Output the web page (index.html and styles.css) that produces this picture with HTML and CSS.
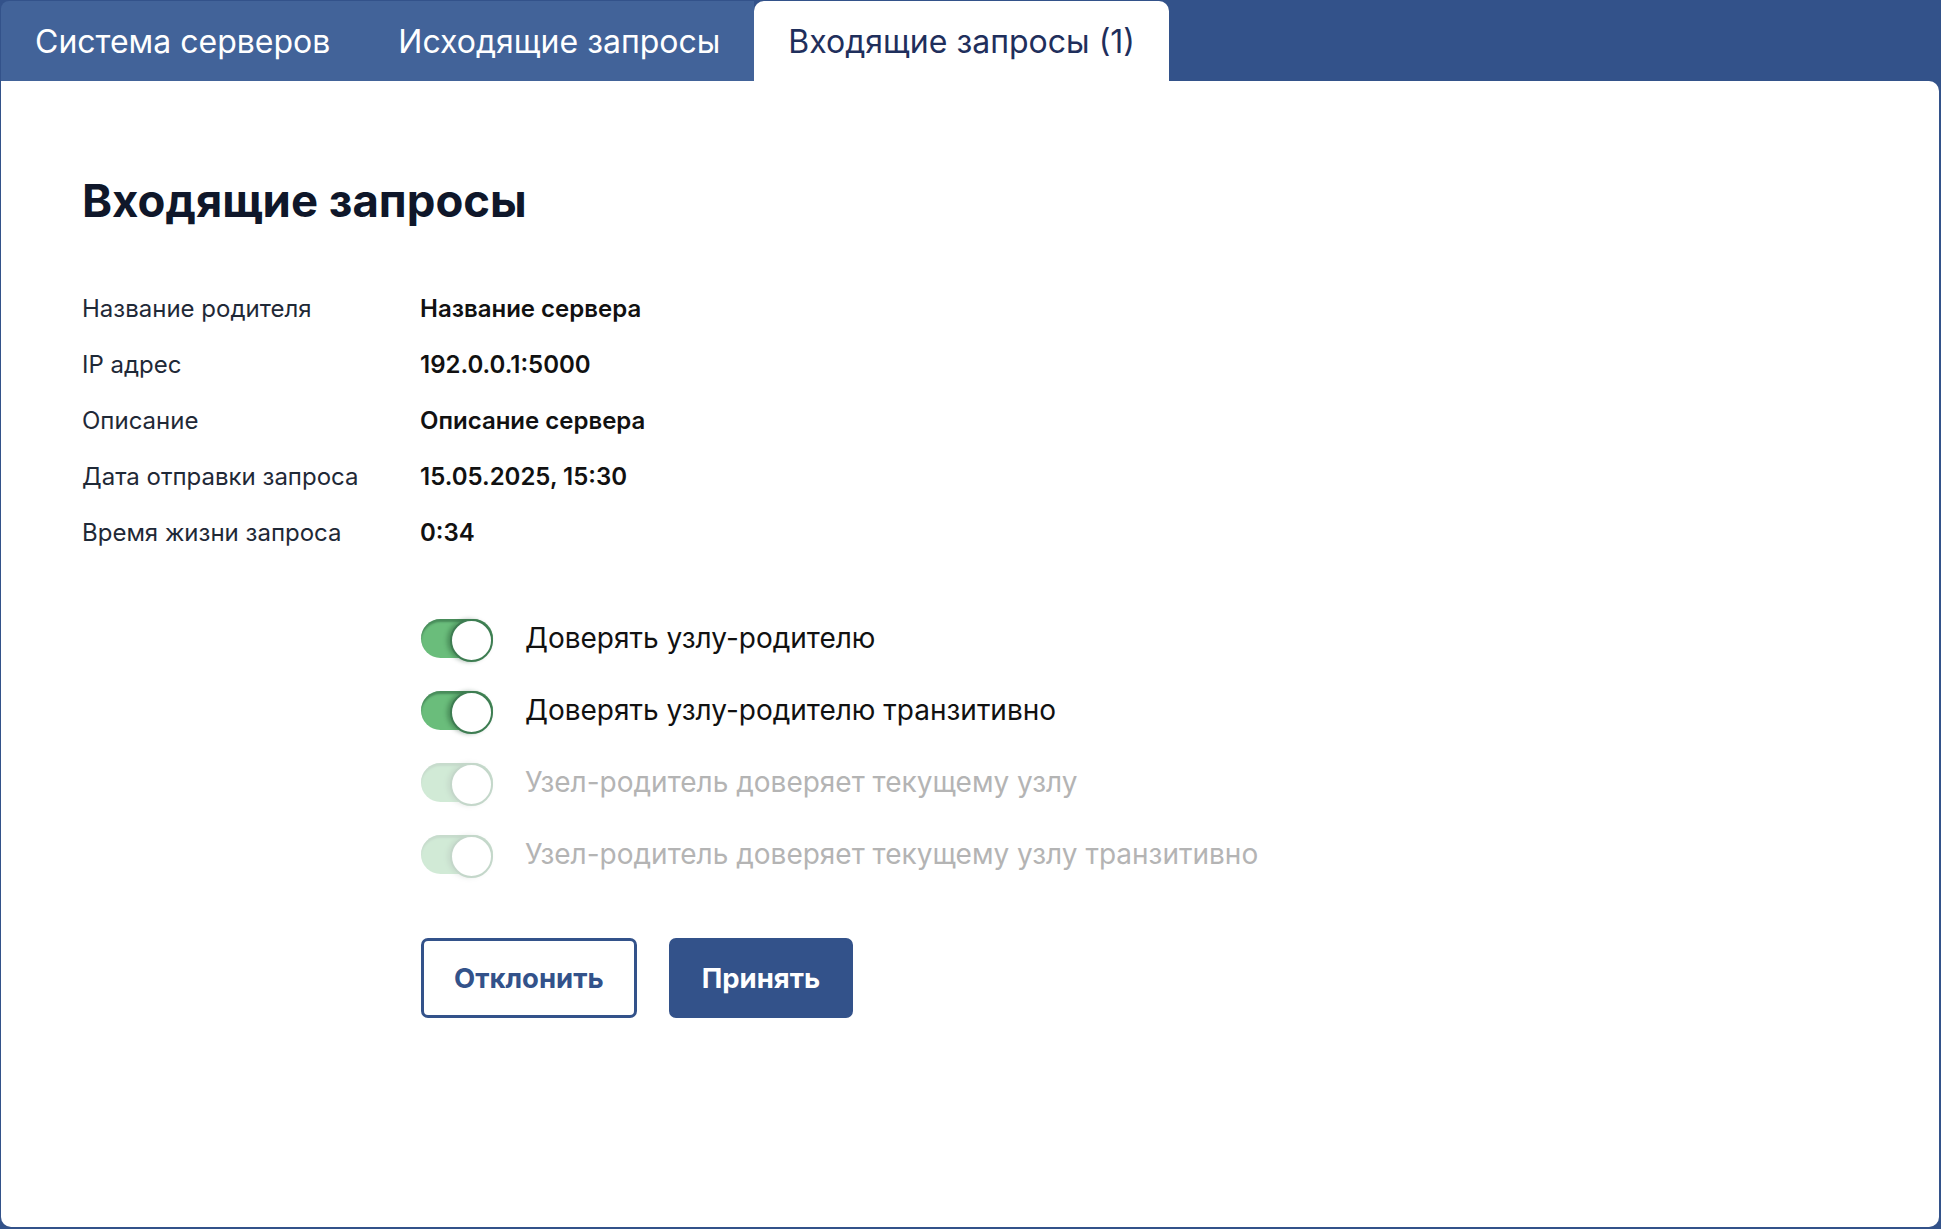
FILE: index.html
```html
<!DOCTYPE html>
<html lang="ru">

<head>
    <meta charset="UTF-8">
    <meta name="viewport" content="width=device-width, initial-scale=1.0">
    <title>Входящие запросы</title>
    <link rel="stylesheet" href="styles.css">
</head>

<body>

    <div class="app">
        <nav class="tabs">
            <a class="tab" href="#">Система серверов</a>
            <a class="tab" href="#">Исходящие запросы</a>
            <a class="tab active" href="#">Входящие запросы (1)</a>
        </nav>

        <main class="panel">
            <h1 class="title">Входящие запросы</h1>

            <div class="info">
                <span class="label">Название родителя</span>
                <span class="value">Название сервера</span>

                <span class="label">IP адрес</span>
                <span class="value">192.0.0.1:5000</span>

                <span class="label">Описание</span>
                <span class="value">Описание сервера</span>

                <span class="label">Дата отправки запроса</span>
                <span class="value">15.05.2025, 15:30</span>

                <span class="label">Время жизни запроса</span>
                <span class="value">0:34</span>
            </div>

            <div class="options">
                <label class="switch-row">
                    <input type="checkbox" checked>
                    <span class="switch"></span>
                    <span class="switch-text">Доверять узлу-родителю</span>
                </label>
                <label class="switch-row">
                    <input type="checkbox" checked>
                    <span class="switch"></span>
                    <span class="switch-text">Доверять узлу-родителю транзитивно</span>
                </label>
                <label class="switch-row disabled">
                    <input type="checkbox" checked disabled>
                    <span class="switch"></span>
                    <span class="switch-text">Узел-родитель доверяет текущему узлу</span>
                </label>
                <label class="switch-row disabled">
                    <input type="checkbox" checked disabled>
                    <span class="switch"></span>
                    <span class="switch-text">Узел-родитель доверяет текущему узлу транзитивно</span>
                </label>
            </div>

            <div class="actions">
                <button class="btn btn-outline">Отклонить</button>
                <button class="btn btn-primary">Принять</button>
            </div>
        </main>
    </div>

</body>

</html>
```

FILE: styles.css
```css
* {
    margin: 0;
    padding: 0;
    box-sizing: border-box;
}

body {
    background: #33528a;
    font-family: Inter, "Noto Sans", sans-serif;
    color: #111827;
}

.app {
    display: flex;
    flex-direction: column;
    height: 100vh;
    padding: 1px 2px 2px 1px;
}

/* Tabs */
.tabs {
    display: flex;
    height: 80px;
}

.tab {
    display: flex;
    align-items: center;
    padding: 0 34px;
    font-size: 32px;
    color: #fff;
    text-decoration: none;
    background: #426399;
}

.tab:first-child {
    border-top-left-radius: 8px;
}

.tab.active {
    background: #fff;
    color: #1f2f5c;
    border-radius: 10px 10px 0 0;
}

/* Content panel */
.panel {
    flex: 1;
    background: #fff;
    border-radius: 0 10px 10px 10px;
    padding: 96px 81px 0;
}

.title {
    font-size: 45.5px;
    line-height: 48px;
    font-weight: 700;
    color: #0f172a;
    margin-bottom: 55px;
}

.info {
    display: grid;
    grid-template-columns: 338px auto;
    grid-auto-rows: 56px;
    align-items: center;
    font-size: 24px;
}

.label {
    color: #1f2937;
}

.value {
    font-weight: 600;
    color: #111;
}

/* Switches */
.options {
    margin: 42px 0 0 339px;
}

.switch-row {
    display: flex;
    align-items: center;
    gap: 32px;
    height: 72px;
    font-size: 28px;
    color: #111;
}

.switch-row input {
    display: none;
}

.switch {
    position: relative;
    width: 72px;
    height: 39px;
    border-radius: 20px;
    background: #6abd7b;
    box-shadow: inset 0 3px 2px rgba(30, 80, 50, 0.45);
}

.switch::after {
    content: '';
    position: absolute;
    top: 0;
    right: 0;
    width: 39px;
    height: 39px;
    border-radius: 50%;
    background: #fff;
    border: 2px solid #3e7d52;
    box-shadow: -3px 0 4px rgba(20, 60, 35, 0.35);
}

.switch-row.disabled .switch {
    opacity: 0.3;
}

.switch-row.disabled .switch-text {
    color: #b4b4b4;
}

/* Buttons */
.actions {
    display: flex;
    gap: 32px;
    margin: 48px 0 0 339px;
}

.btn {
    height: 80px;
    padding: 0 30px;
    border: 3px solid #33528a;
    border-radius: 7px;
    font-family: Inter, sans-serif;
    font-size: 27.5px;
    font-weight: 700;
    cursor: pointer;
}

.btn-outline {
    background: #fff;
    color: #33528a;
}

.btn-primary {
    background: #33528a;
    color: #fff;
}
```
